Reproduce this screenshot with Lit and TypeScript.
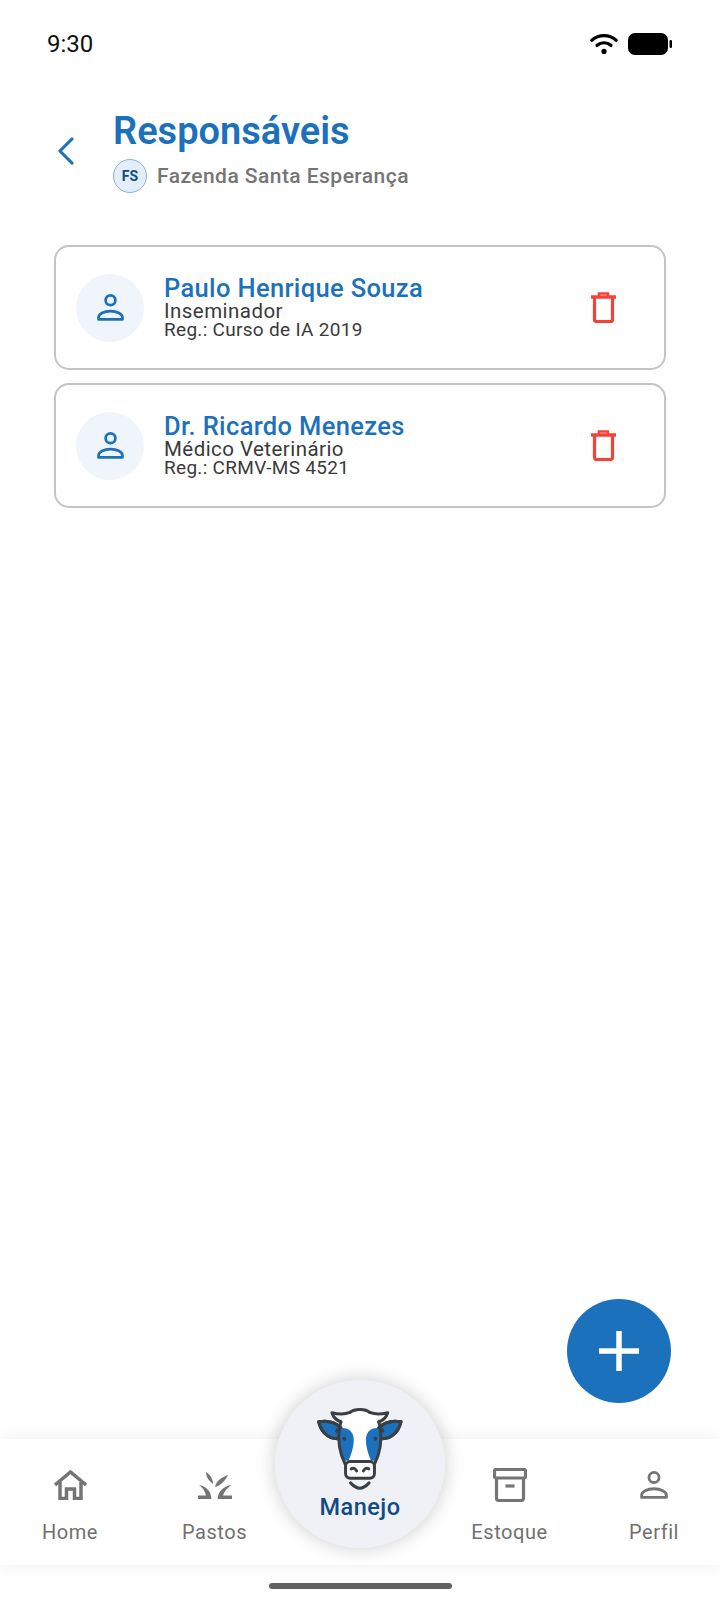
import { LitElement, html, css, svg } from 'lit';
import { customElement } from 'lit/decorators.js';

const personIcon = (size: number, color: string) => html`
  <svg width=${size} height=${size} viewBox="0 0 26 26" fill="none" stroke=${color} stroke-width="2.600" stroke-linejoin="round">
    <circle cx="13" cy="6" r="4.700"></circle>
    <path d="M1.500 24.500v-2c0-3.200 5-6 11.500-6s11.500 2.800 11.500 6v2z"></path>
  </svg>`;

const cowHalf = svg`
  <path d="M245 170 C225 150 200 148 178 152 C185 180 205 205 238 203 Z" fill="#1c71bc"></path>
  <path d="M240 172 C262 168 278 176 283 198 C286 225 276 250 268 270 L252 268 C240 240 238 200 240 172Z" fill="#1c71bc" stroke="none"></path>
  <path d="M245 170 C225 150 200 148 178 152 C185 180 205 205 238 203" fill="none"></path>
  <path d="M240 172 C236 205 240 245 258 280" fill="none"></path>
  <path d="M245 152 C232 148 222 138 218 125 C238 130 258 130 272 124" fill="none"></path>
  <path d="M245 152 L240 172 L232 180" fill="none"></path>
  <circle cx="255" cy="203" r="6" fill="#3a3f44" stroke="none"></circle>
`;

@customElement('app-root')
export class AppRoot extends LitElement {
  static styles = css`
    :host {
      display: block;
      position: relative;
      width: 720px;
      height: 1606px;
      overflow: hidden;
      background: #fff;
      font-family: Roboto, 'Noto Sans', sans-serif;
    }
    .screen {
      display: flex;
      flex-direction: column;
      height: 100%;
    }
    .status {
      display: flex;
      justify-content: space-between;
      align-items: center;
      height: 30px;
      margin-top: 29px;
      padding: 0 47px;
      font-size: 24px;
      color: #111;
    }
    .status-icons {
      display: flex;
      align-items: center;
      gap: 10px;
    }
    .header {
      display: flex;
      align-items: center;
      gap: 38px;
      margin-top: 52px;
      padding-left: 57px;
    }
    .back {
      margin-bottom: 2px;
    }
    .title {
      font-size: 38px;
      line-height: 40px;
      font-weight: 600;
      color: #1c71bc;
    }
    .farm {
      display: flex;
      align-items: center;
      gap: 10px;
      margin-top: 8px;
      font-size: 21px;
      font-weight: 500;
      letter-spacing: 0.45px;
      color: #757575;
    }
    .badge {
      display: flex;
      align-items: center;
      justify-content: center;
      width: 32px;
      height: 32px;
      border: 1.500px solid #86b3dc;
      border-radius: 50%;
      background: #e3eef8;
      font-size: 14px;
      font-weight: 700;
      letter-spacing: 0;
      color: #0f4c86;
    }
    .list {
      display: flex;
      flex-direction: column;
      gap: 13px;
      margin-top: 52px;
      padding: 0 54px;
    }
    .card {
      display: flex;
      align-items: center;
      height: 125px;
      box-sizing: border-box;
      padding: 0 48px 0 20px;
      border: 2px solid #c4c4c4;
      border-radius: 15px;
      background: #fff;
    }
    .avatar {
      display: flex;
      align-items: center;
      justify-content: center;
      width: 68px;
      height: 68px;
      flex: none;
      border-radius: 50%;
      background: #eff5fb;
    }
    .info {
      flex: 1;
      margin-left: 20px;
      padding-bottom: 2px;
      color: #3a3a3a;
    }
    .name {
      font-size: 25.500px;
      line-height: 27px;
      font-weight: 500;
      letter-spacing: 0.35px;
      color: #1c71bc;
    }
    .role {
      font-size: 20.500px;
      line-height: 19px;
      letter-spacing: 0.45px;
    }
    .reg {
      font-size: 19px;
      line-height: 18px;
      letter-spacing: 0.3px;
    }
    .nav {
      position: absolute;
      left: 0;
      right: 0;
      top: 1439px;
      display: flex;
      gap: 24.500px;
      height: 126px;
      box-sizing: border-box;
      padding: 28px 0 0 10px;
      background: #fff;
      box-shadow: 0 0 18px rgba(0, 0, 0, 0.07);
    }
    .nav-item {
      display: flex;
      flex-direction: column;
      align-items: center;
      width: 120px;
      font-size: 20px;
      letter-spacing: 0.55px;
      color: #707070;
    }
    .nav-icon {
      display: flex;
      align-items: center;
      justify-content: center;
      height: 36px;
      margin-bottom: 17px;
    }
    .nav-slot {
      width: 126px;
    }
    .manejo {
      position: absolute;
      left: 275px;
      top: 1380px;
      display: flex;
      flex-direction: column;
      align-items: center;
      width: 170px;
      height: 168px;
      box-sizing: border-box;
      padding-top: 26px;
      border-radius: 50%;
      background: #f0f1f6;
      box-shadow: 0 0 20px rgba(0, 0, 0, 0.2);
      font-size: 23.500px;
      font-weight: 500;
      letter-spacing: 0.5px;
      color: #0f4c86;
    }
    .manejo span {
      margin-top: 2px;
    }
    .fab {
      position: absolute;
      left: 567px;
      top: 1299px;
      display: flex;
      align-items: center;
      justify-content: center;
      width: 104px;
      height: 104px;
      border-radius: 50%;
      background: #1c71bc;
    }
    .home-bar {
      position: absolute;
      left: 269px;
      top: 1583px;
      width: 183px;
      height: 6px;
      border-radius: 3px;
      background: #616161;
    }
  `;

  people = [
    { name: 'Paulo Henrique Souza', role: 'Inseminador', reg: 'Reg.: Curso de IA 2019' },
    { name: 'Dr. Ricardo Menezes', role: 'Médico Veterinário', reg: 'Reg.: CRMV-MS 4521' },
  ];

  renderCard(p: { name: string; role: string; reg: string }) {
    return html`
      <div class="card">
        <div class="avatar">${personIcon(27, '#1c71bc')}</div>
        <div class="info">
          <div class="name">${p.name}</div>
          <div class="role">${p.role}</div>
          <div class="reg">${p.reg}</div>
        </div>
        <svg width="25" height="31" viewBox="0 0 25 31" fill="none" stroke="#f44336">
          <path d="M0 5h25" stroke-width="3.500"></path>
          <path d="M8 4V1.500h9V4" stroke-width="2.500"></path>
          <path d="M3.500 6v21.500c0 1.500 1 2 2 2h14c1 0 2-.5 2-2V6" stroke-width="3.200"></path>
        </svg>
      </div>`;
  }

  render() {
    return html`
      <div class="screen">
        <div class="status">
          <span>9:30</span>
          <div class="status-icons">
            <svg width="28" height="22" viewBox="0 0 30 23" fill="none" stroke="#000" stroke-width="3.500" stroke-linecap="round">
              <path d="M2 7.500C9.500 1 20.500 1 28 7.500"></path>
              <path d="M7.500 13C12 9.500 18 9.500 22.500 13"></path>
              <circle cx="15" cy="19.500" r="2.800" fill="#000" stroke="none"></circle>
            </svg>
            <svg width="45" height="22" viewBox="0 0 45 22">
              <rect x="0" y="0" width="40" height="22" rx="7" fill="#000"></rect>
              <rect x="41.500" y="7" width="2.500" height="8" rx="1.200" fill="#000"></rect>
            </svg>
          </div>
        </div>
        <div class="header">
          <svg class="back" width="18" height="28" viewBox="0 0 19 30" fill="none" stroke="#1c71bc" stroke-width="3.200" stroke-linecap="round" stroke-linejoin="round">
            <path d="M16 2 3 15l13 13"></path>
          </svg>
          <div>
            <div class="title">Responsáveis</div>
            <div class="farm"><div class="badge">FS</div>Fazenda Santa Esperança</div>
          </div>
        </div>
        <div class="list">${this.people.map((p) => this.renderCard(p))}</div>
      </div>

      <div class="fab">
        <svg width="40" height="40" viewBox="0 0 40 40" stroke="#fff" stroke-width="5.500"><path d="M20 0v40M0 20h40"></path></svg>
      </div>

      <div class="nav">
        <div class="nav-item">
          <div class="nav-icon">
            <svg width="33" height="30" viewBox="0 0 33 30" fill="none" stroke="#757575" stroke-width="3.500">
              <path d="M1 15 16.500 2 32 15"></path>
              <path d="M6 12v16.500h6.500V19h8v9.500H27V12"></path>
            </svg>
          </div>
          Home
        </div>
        <div class="nav-item">
          <div class="nav-icon">
            <svg width="34" height="27" viewBox="0 0 34 27" fill="#757575">
              <path d="M0 27v-3.500h8C7 19 4 15 1 13c7 1 12 6 12.500 14z"></path>
              <path d="M34 27v-3.500H25c1-4 4-7 8.500-10.500C26 14 20 19 19.500 27z"></path>
              <path d="M8 0c4 2.500 7 7 7 12-4-3-7-7-7-12z"></path>
              <path d="M30 3c-3 6-7 10-13 12 1-6 7-10 13-12z"></path>
            </svg>
          </div>
          Pastos
        </div>
        <div class="nav-slot"></div>
        <div class="nav-item">
          <div class="nav-icon">
            <svg width="34" height="34" viewBox="0 0 34 34" fill="none" stroke="#757575" stroke-width="3.200" stroke-linejoin="round">
              <rect x="1.500" y="1.500" width="31" height="8.500" rx="1.500"></rect>
              <path d="M3.500 10v20c0 1.500 1 2.500 2.500 2.500h22c1.500 0 2.500-1 2.500-2.500V10"></path>
              <path d="M12.500 18h9"></path>
            </svg>
          </div>
          Estoque
        </div>
        <div class="nav-item">
          <div class="nav-icon">${personIcon(28, '#757575')}</div>
          Perfil
        </div>
      </div>

      <div class="manejo">
        <svg width="88" height="85" viewBox="170 105 265 255" stroke="#3a3f44" stroke-width="9" stroke-linejoin="round" stroke-linecap="round">
          <path d="M245 152 C258 135 270 125 272 124 C285 112 320 112 332 124 C346 130 366 130 386 125 C382 138 372 148 359 152 L364 172 C368 205 364 245 346 280 H258 C240 245 236 205 240 172Z" fill="#fff" stroke="none"></path>
          ${cowHalf}
          <g transform="translate(604 0) scale(-1 1)">${cowHalf}</g>
          <path d="M272 124 C285 112 320 112 332 124" fill="none"></path>
          <rect x="259" y="272" width="87" height="50" rx="14" fill="#fff"></rect>
          <path d="M276 294 C282 290 288 292 292 300" fill="none"></path>
          <path d="M329 294 C323 290 317 292 313 300" fill="none"></path>
          <path d="M274 336 C285 348 295 352 302 352 C309 352 319 348 330 336" fill="none"></path>
        </svg>
        <span>Manejo</span>
      </div>

      <div class="home-bar"></div>
    `;
  }
}
